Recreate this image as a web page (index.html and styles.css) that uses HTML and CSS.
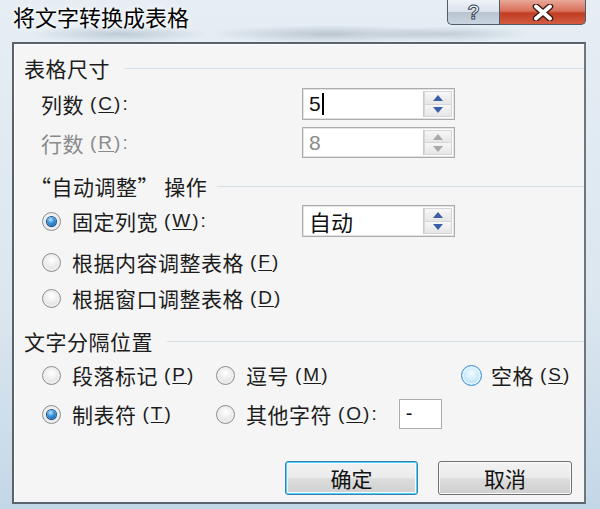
FILE: index.html
```html
<!DOCTYPE html>
<html lang="zh-CN">
<head>
    <meta charset="UTF-8">
    <title>将文字转换成表格</title>
    <link rel="stylesheet" href="styles.css">
</head>
<body>
    <div class="window">
        <div class="titlebar">
            <span class="title">将文字转换成表格</span>
            <div class="caption">
                <span class="cap-help">?</span>
                <span class="cap-close">
                    <svg width="22" height="17" viewBox="0 0 22 17">
                        <path d="M4 2.5 L18 14.5 M18 2.5 L4 14.5" stroke="#3b1a14" stroke-width="6.5" stroke-linecap="round"/>
                        <path d="M4 2.5 L18 14.5 M18 2.5 L4 14.5" stroke="#fff" stroke-width="3.8" stroke-linecap="round"/>
                    </svg>
                </span>
            </div>
        </div>

        <div class="client">
            <div class="group-head h1"><span>表格尺寸</span><i class="rule"></i></div>

            <div class="row r-cols">
                <span class="lbl">列数<span class="key">(<u>C</u>):</span></span>
                <div class="spin">
                    <span class="val">5<i class="caret"></i></span>
                    <span class="spin-btns"><b class="up"></b><b class="down"></b></span>
                </div>
            </div>
            <div class="row r-rows disabled">
                <span class="lbl">行数<span class="key">(<u>R</u>):</span></span>
                <div class="spin">
                    <span class="val">8</span>
                    <span class="spin-btns"><b class="up"></b><b class="down"></b></span>
                </div>
            </div>

            <div class="group-head h2"><span>“自动调整” 操作</span><i class="rule"></i></div>

            <div class="row r-fixed">
                <span class="lbl"><i class="radio on"></i>固定列宽<span class="key">(<u>W</u>):</span></span>
                <div class="spin">
                    <span class="val">自动</span>
                    <span class="spin-btns"><b class="up"></b><b class="down"></b></span>
                </div>
            </div>
            <div class="row r-fit">
                <span class="lbl"><i class="radio"></i>根据内容调整表格<span class="key">(<u>F</u>)</span></span>
            </div>
            <div class="row r-win">
                <span class="lbl"><i class="radio"></i>根据窗口调整表格<span class="key">(<u>D</u>)</span></span>
            </div>

            <div class="group-head h3"><span>文字分隔位置</span><i class="rule"></i></div>

            <div class="sep-grid">
                <span class="lbl"><i class="radio"></i>段落标记<span class="key">(<u>P</u>)</span></span>
                <span class="lbl"><i class="radio"></i>逗号<span class="key">(<u>M</u>)</span></span>
                <span class="lbl"><i class="radio hover"></i>空格<span class="key">(<u>S</u>)</span></span>
                <span class="lbl"><i class="radio on"></i>制表符<span class="key">(<u>T</u>)</span></span>
                <span class="lbl other"><i class="radio"></i>其他字符<span class="key">(<u>O</u>):</span><span class="small-box">-</span></span>
                <span></span>
            </div>

            <div class="buttons">
                <button class="btn default">确定</button>
                <button class="btn">取消</button>
            </div>
        </div>
    </div>
</body>
</html>
```

FILE: styles.css
```css
body{
    margin: 0;
    background: #ffffff;
    font-family: "Noto Sans CJK SC", "Liberation Sans", sans-serif;
}
.window{
    width: 600px;
    height: 509px;
    display: flex;
    flex-direction: column;
    background:
        radial-gradient(ellipse 90px 9px at 120px 34px, rgba(120,140,160,.35), transparent),
        radial-gradient(ellipse 120px 9px at 330px 34px, rgba(110,125,140,.35), transparent),
        radial-gradient(ellipse 80px 8px at 450px 34px, rgba(120,135,150,.3), transparent),
        linear-gradient(to bottom, #e6eef4 0%, #dbe6ef 60%, #c4d7e7 100%);
    overflow: hidden;
}
.titlebar{
    height: 42px;
    flex: none;
    display: flex;
    justify-content: space-between;
    align-items: flex-start;
    padding: 0 14px 0 13px;
}
.title{
    font-size: 22px;
    line-height: 22px;
    margin-top: 5px;
    color: #000;
    text-shadow: 0 0 6px #fff, 0 0 3px #fff;
}
.caption{
    display: flex;
    height: 25px;
}
.cap-help, .cap-close{
    display: flex;
    align-items: center;
    justify-content: center;
    height: 24px;
    border: 1px solid #4f5c69;
    border-top: none;
}
.cap-help{
    width: 51px;
    border-right: none;
    border-radius: 0 0 0 5px;
    background: linear-gradient(to bottom, #eef3f7 0%, #d9e2ea 50%, #b8c5d1 52%, #c9d6e1 100%);
    font-family: "Liberation Sans", sans-serif;
    font-weight: bold;
    font-size: 20px;
    color: #fff;
    -webkit-text-stroke: 1px #334455;
}
.cap-close{
    width: 85px;
    border-radius: 0 0 5px 0;
    background: linear-gradient(to bottom, #e9a898 0%, #d9715c 45%, #c13d24 55%, #d35b40 100%);
}

.client{
    flex: 1;
    margin: 0 14px 5px 12px;
    border: 2px solid #58636e;
    border-right-color: #6d7780;
    background: #f5f5f5;
    box-shadow: inset 1px 1px 0 #ffffff;
    padding: 13px 0 0 0;
    color: #1c1c1c;
    font-size: 21px;
    letter-spacing: 0.5px;
}

.group-head{
    display: flex;
    align-items: center;
    height: 22px;
    padding-left: 10px;
    line-height: 22px;
}
.group-head .rule{
    flex: 1;
    height: 1px;
    background: #d5dfe6;
    margin-left: 14px;
}
.h2{ margin-top: 17px; padding-left: 16px; }
.h2 .rule{ margin-left: 10px; }
.h3{ margin-top: 21px; }

.lbl{
    display: inline-flex;
    align-items: center;
    white-space: nowrap;
    line-height: 22px;
}
.key{
    font-family: "Liberation Sans", sans-serif;
    font-size: 19px;
    letter-spacing: 2px;
    margin-left: 6px;
}
.key u{
    text-underline-offset: 2px;
}

.row{
    display: flex;
    align-items: center;
    padding-left: 27px;
}
.row .lbl{ width: 261px; }
.r-cols{ margin-top: 9px; height: 32px; }
.r-rows{ margin-top: 7px; height: 31px; }
.r-fixed{ margin-top: 8px; height: 32px; }
.r-fit{ margin-top: 14px; height: 22px; }
.r-win{ margin-top: 14px; height: 22px; }

.disabled .lbl{ color: #8a8a8a; }

.spin{
    width: 153px;
    height: 100%;
    box-sizing: border-box;
    border: 1px solid #a9abad;
    box-shadow: inset 0 0 0 1px #e2e3e5;
    background: #fff;
    display: flex;
    align-items: center;
    padding: 2px 2px 2px 0;
    letter-spacing: 0;
}
.spin .val{
    flex: 1;
    padding-left: 6px;
    font-family: "Liberation Sans", "Noto Sans CJK SC", sans-serif;
    font-size: 21px;
    color: #111;
    display: flex;
    align-items: center;
}
.r-fixed .spin .val{
    font-family: "Noto Sans CJK SC", sans-serif;
    font-size: 22px;
}
.caret{
    display: inline-block;
    width: 2px;
    height: 22px;
    background: #000;
    margin-left: 1px;
}
.disabled .spin .val{ color: #8a8a8a; }
.spin-btns{
    width: 28px;
    height: 100%;
    display: flex;
    flex-direction: column;
    border-left: 1px solid #c8cbce;
}
.spin-btns b{
    flex: 1;
    display: flex;
    align-items: center;
    justify-content: center;
    background: linear-gradient(to bottom, #f7f7f7, #e6e6e6);
    border: 1px solid #d4d6d8;
}
.spin-btns b + b{ border-top: none; }
.spin-btns .up::after{
    content: "";
    border: 5px solid transparent;
    border-top: none;
    border-bottom: 6px solid #3a5ea8;
}
.spin-btns .down::after{
    content: "";
    border: 5px solid transparent;
    border-bottom: none;
    border-top: 6px solid #3a5ea8;
}
.disabled .spin-btns .up::after{ border-bottom-color: #a9a9a9; }
.disabled .spin-btns .down::after{ border-top-color: #a9a9a9; }

.radio{
    width: 19px;
    height: 19px;
    box-sizing: border-box;
    border-radius: 50%;
    border: 1px solid #8c8f92;
    background: radial-gradient(circle at 50% 35%, #ffffff 0%, #f0f0f0 40%, #cfd1d3 100%);
    box-shadow: inset 0 0 0 2px #eeeeee;
    margin-left: 1px;
    margin-right: 11px;
    display: inline-flex;
    align-items: center;
    justify-content: center;
    flex: none;
}
.radio.on::after{
    content: "";
    width: 9px;
    height: 9px;
    border-radius: 50%;
    background: radial-gradient(circle at 40% 30%, #bfe6ff 0%, #3d98e0 40%, #0b4f99 100%);
    box-shadow: 0 0 0 1px #1c4f86;
}
.radio.hover{
    width: 21px;
    height: 21px;
    border-color: #3a8dd0;
    background: radial-gradient(circle at 50% 40%, #f4fbff 0%, #cdebfc 45%, #8ecbf2 100%);
    box-shadow: inset 0 0 0 2px #dff2fd;
    margin-right: 9px;
}

.sep-grid{
    display: grid;
    grid-template-columns: 174px 245px 1fr;
    grid-template-rows: 22px 30px;
    row-gap: 13px;
    padding-left: 27px;
    margin-top: 12px;
    align-items: center;
}
.sep-grid .other{ height: 30px; }
.small-box{
    width: 43px;
    height: 30px;
    box-sizing: border-box;
    border: 1px solid #a9abad;
    background: #fff;
    margin-left: 20px;
    font-family: "Liberation Sans", sans-serif;
    font-size: 20px;
    line-height: 26px;
    padding-left: 6px;
    color: #111;
}

.buttons{
    display: flex;
    justify-content: flex-end;
    gap: 20px;
    margin-top: 32px;
    padding-right: 12px;
}
.btn{
    width: 134px;
    height: 34px;
    border: 1px solid #707070;
    border-radius: 3px;
    background: linear-gradient(to bottom, #f2f2f2 0%, #ebebeb 48%, #dddddd 52%, #cfcfcf 100%);
    box-shadow: inset 0 0 0 1px #fafafa;
    font-family: "Noto Sans CJK SC", sans-serif;
    font-size: 21px;
    color: #111;
    padding: 0;
}
.btn.default{
    width: 133px;
    border-color: #3c7fb1;
    box-shadow: inset 0 0 0 1px #48d0f6, inset 0 0 0 2px #f5fbfe;
}
```
